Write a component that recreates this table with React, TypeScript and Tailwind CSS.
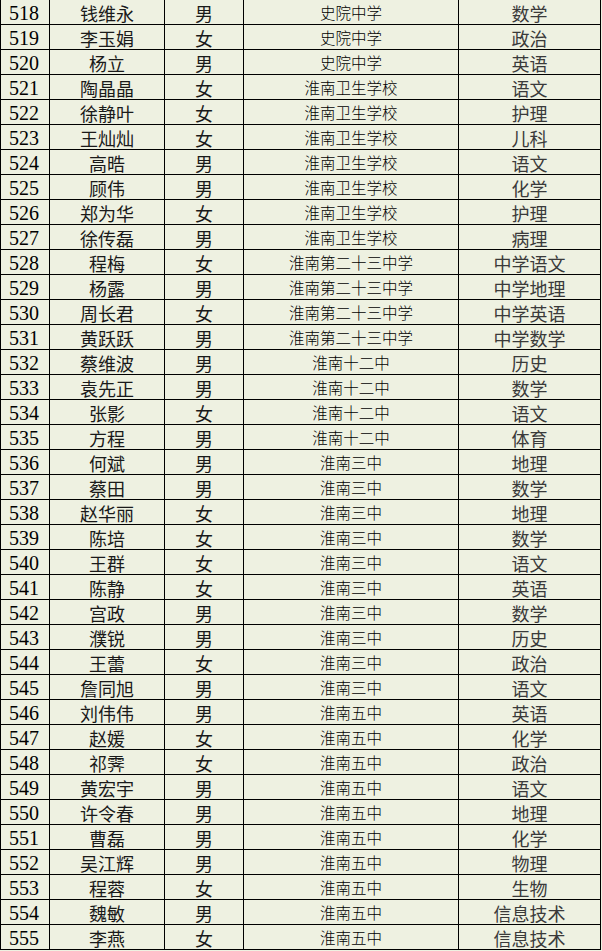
const rows: [string, string, string, string][] = [
  ['钱维永', '男', '史院中学', '数学'],
  ['李玉娟', '女', '史院中学', '政治'],
  ['杨立', '男', '史院中学', '英语'],
  ['陶晶晶', '女', '淮南卫生学校', '语文'],
  ['徐静叶', '女', '淮南卫生学校', '护理'],
  ['王灿灿', '女', '淮南卫生学校', '儿科'],
  ['高晧', '男', '淮南卫生学校', '语文'],
  ['顾伟', '男', '淮南卫生学校', '化学'],
  ['郑为华', '女', '淮南卫生学校', '护理'],
  ['徐传磊', '男', '淮南卫生学校', '病理'],
  ['程梅', '女', '淮南第二十三中学', '中学语文'],
  ['杨露', '男', '淮南第二十三中学', '中学地理'],
  ['周长君', '女', '淮南第二十三中学', '中学英语'],
  ['黄跃跃', '男', '淮南第二十三中学', '中学数学'],
  ['蔡维波', '男', '淮南十二中', '历史'],
  ['袁先正', '男', '淮南十二中', '数学'],
  ['张影', '女', '淮南十二中', '语文'],
  ['方程', '男', '淮南十二中', '体育'],
  ['何斌', '男', '淮南三中', '地理'],
  ['蔡田', '男', '淮南三中', '数学'],
  ['赵华丽', '女', '淮南三中', '地理'],
  ['陈培', '女', '淮南三中', '数学'],
  ['王群', '女', '淮南三中', '语文'],
  ['陈静', '女', '淮南三中', '英语'],
  ['宫政', '男', '淮南三中', '数学'],
  ['濮锐', '男', '淮南三中', '历史'],
  ['王蕾', '女', '淮南三中', '政治'],
  ['詹同旭', '男', '淮南三中', '语文'],
  ['刘伟伟', '男', '淮南五中', '英语'],
  ['赵媛', '女', '淮南五中', '化学'],
  ['祁霁', '女', '淮南五中', '政治'],
  ['黄宏宇', '男', '淮南五中', '语文'],
  ['许令春', '男', '淮南五中', '地理'],
  ['曹磊', '男', '淮南五中', '化学'],
  ['吴江辉', '男', '淮南五中', '物理'],
  ['程蓉', '女', '淮南五中', '生物'],
  ['魏敏', '男', '淮南五中', '信息技术'],
  ['李燕', '女', '淮南五中', '信息技术'],
]

const serif = "font-['Liberation_Serif','Noto_Sans_CJK_SC',serif]"
const cjk = "font-['Noto_Sans_CJK_SC',sans-serif]"

export default function App() {
  return (
    <div className="w-[602px] h-[951px] bg-[#eef1e1] overflow-hidden">
      <div className="w-[601px] border-l border-black">
        {rows.map(([name, sex, school, subject], i) => (
          <div
            key={i}
            className="grid grid-cols-[49px_115px_79px_215px_142px] h-[25px] border-b border-black text-black"
          >
            {/* number */}
            <div className={`border-r border-black pl-[8px] pt-[1px] flex items-center text-[20px] leading-none ${serif}`}>
              {518 + i}
            </div>
            <div className={`border-r border-black pt-[1px] flex items-center justify-center text-[18px] leading-none text-[#1a1a1a] ${cjk}`}>
              {name}
            </div>
            <div className={`border-r border-black pt-[1px] flex items-center justify-center text-[18px] leading-none text-[#1a1a1a] ${cjk}`}>
              {sex}
            </div>
            <div className={`border-r border-black pt-[1px] flex items-center justify-center text-[15.5px] leading-none font-light ${cjk}`}>
              {school}
            </div>
            <div className={`border-r border-black pt-[1px] flex items-center justify-center text-[18px] leading-none text-[#3a3a3a] ${cjk}`}>
              {subject}
            </div>
          </div>
        ))}
      </div>
    </div>
  )
}
